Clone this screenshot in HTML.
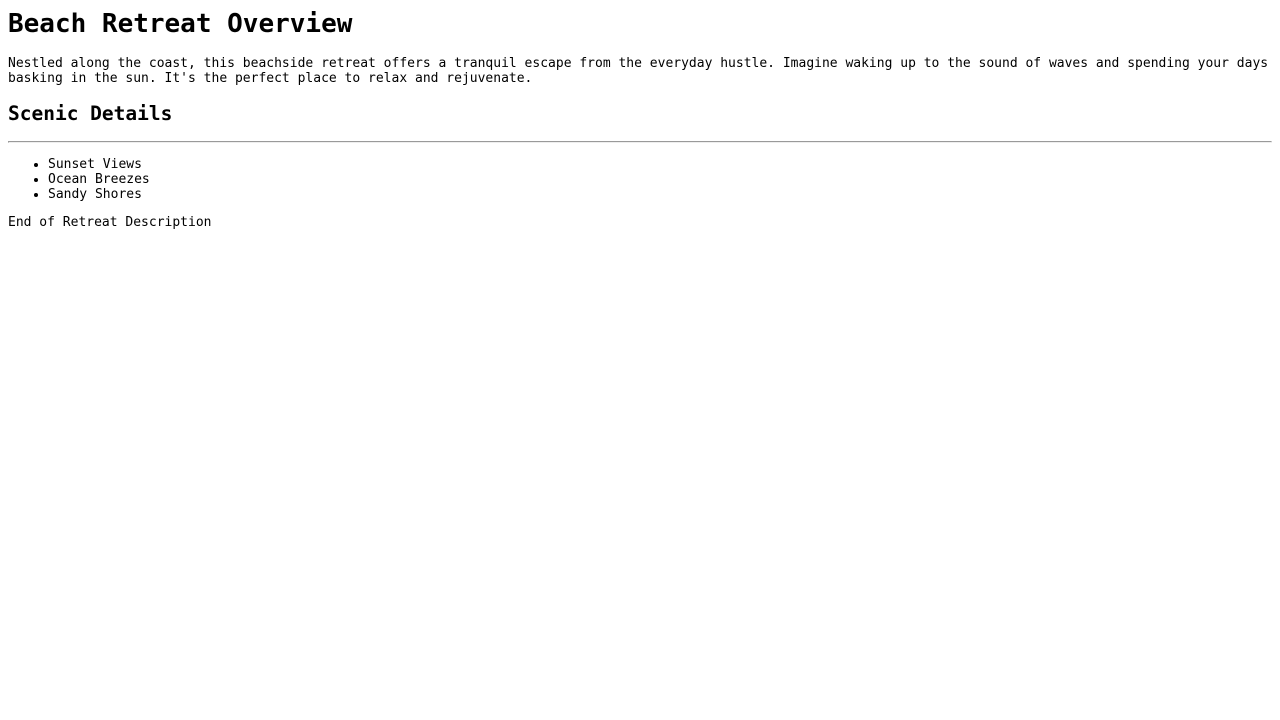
<!DOCTYPE html>
<html><head><meta charset="utf-8"><style>
body{margin:8px;padding-top:1px;font-family:"DejaVu Sans Mono","Liberation Mono",monospace;font-size:13px;color:#000;background:#fff}
h1{font-size:26px;margin:0 0 17.4px 0}
h2{font-size:19.5px;margin:15.2px 0 16.2px 0}
p{margin:13px 0}
ul{margin:14px 0 13px 0;padding-left:40px}
hr{margin:8px 0}
</style></head><body>
<h1>Beach Retreat Overview</h1>
<p>Nestled along the coast, this beachside retreat offers a tranquil escape from the everyday hustle. Imagine waking up to the sound of waves and spending your days basking in the sun. It's the perfect place to relax and rejuvenate.</p>
<h2>Scenic Details</h2>
<hr>
<ul><li>Sunset Views</li><li>Ocean Breezes</li><li>Sandy Shores</li></ul>
<p>End of Retreat Description</p>
</body></html>
